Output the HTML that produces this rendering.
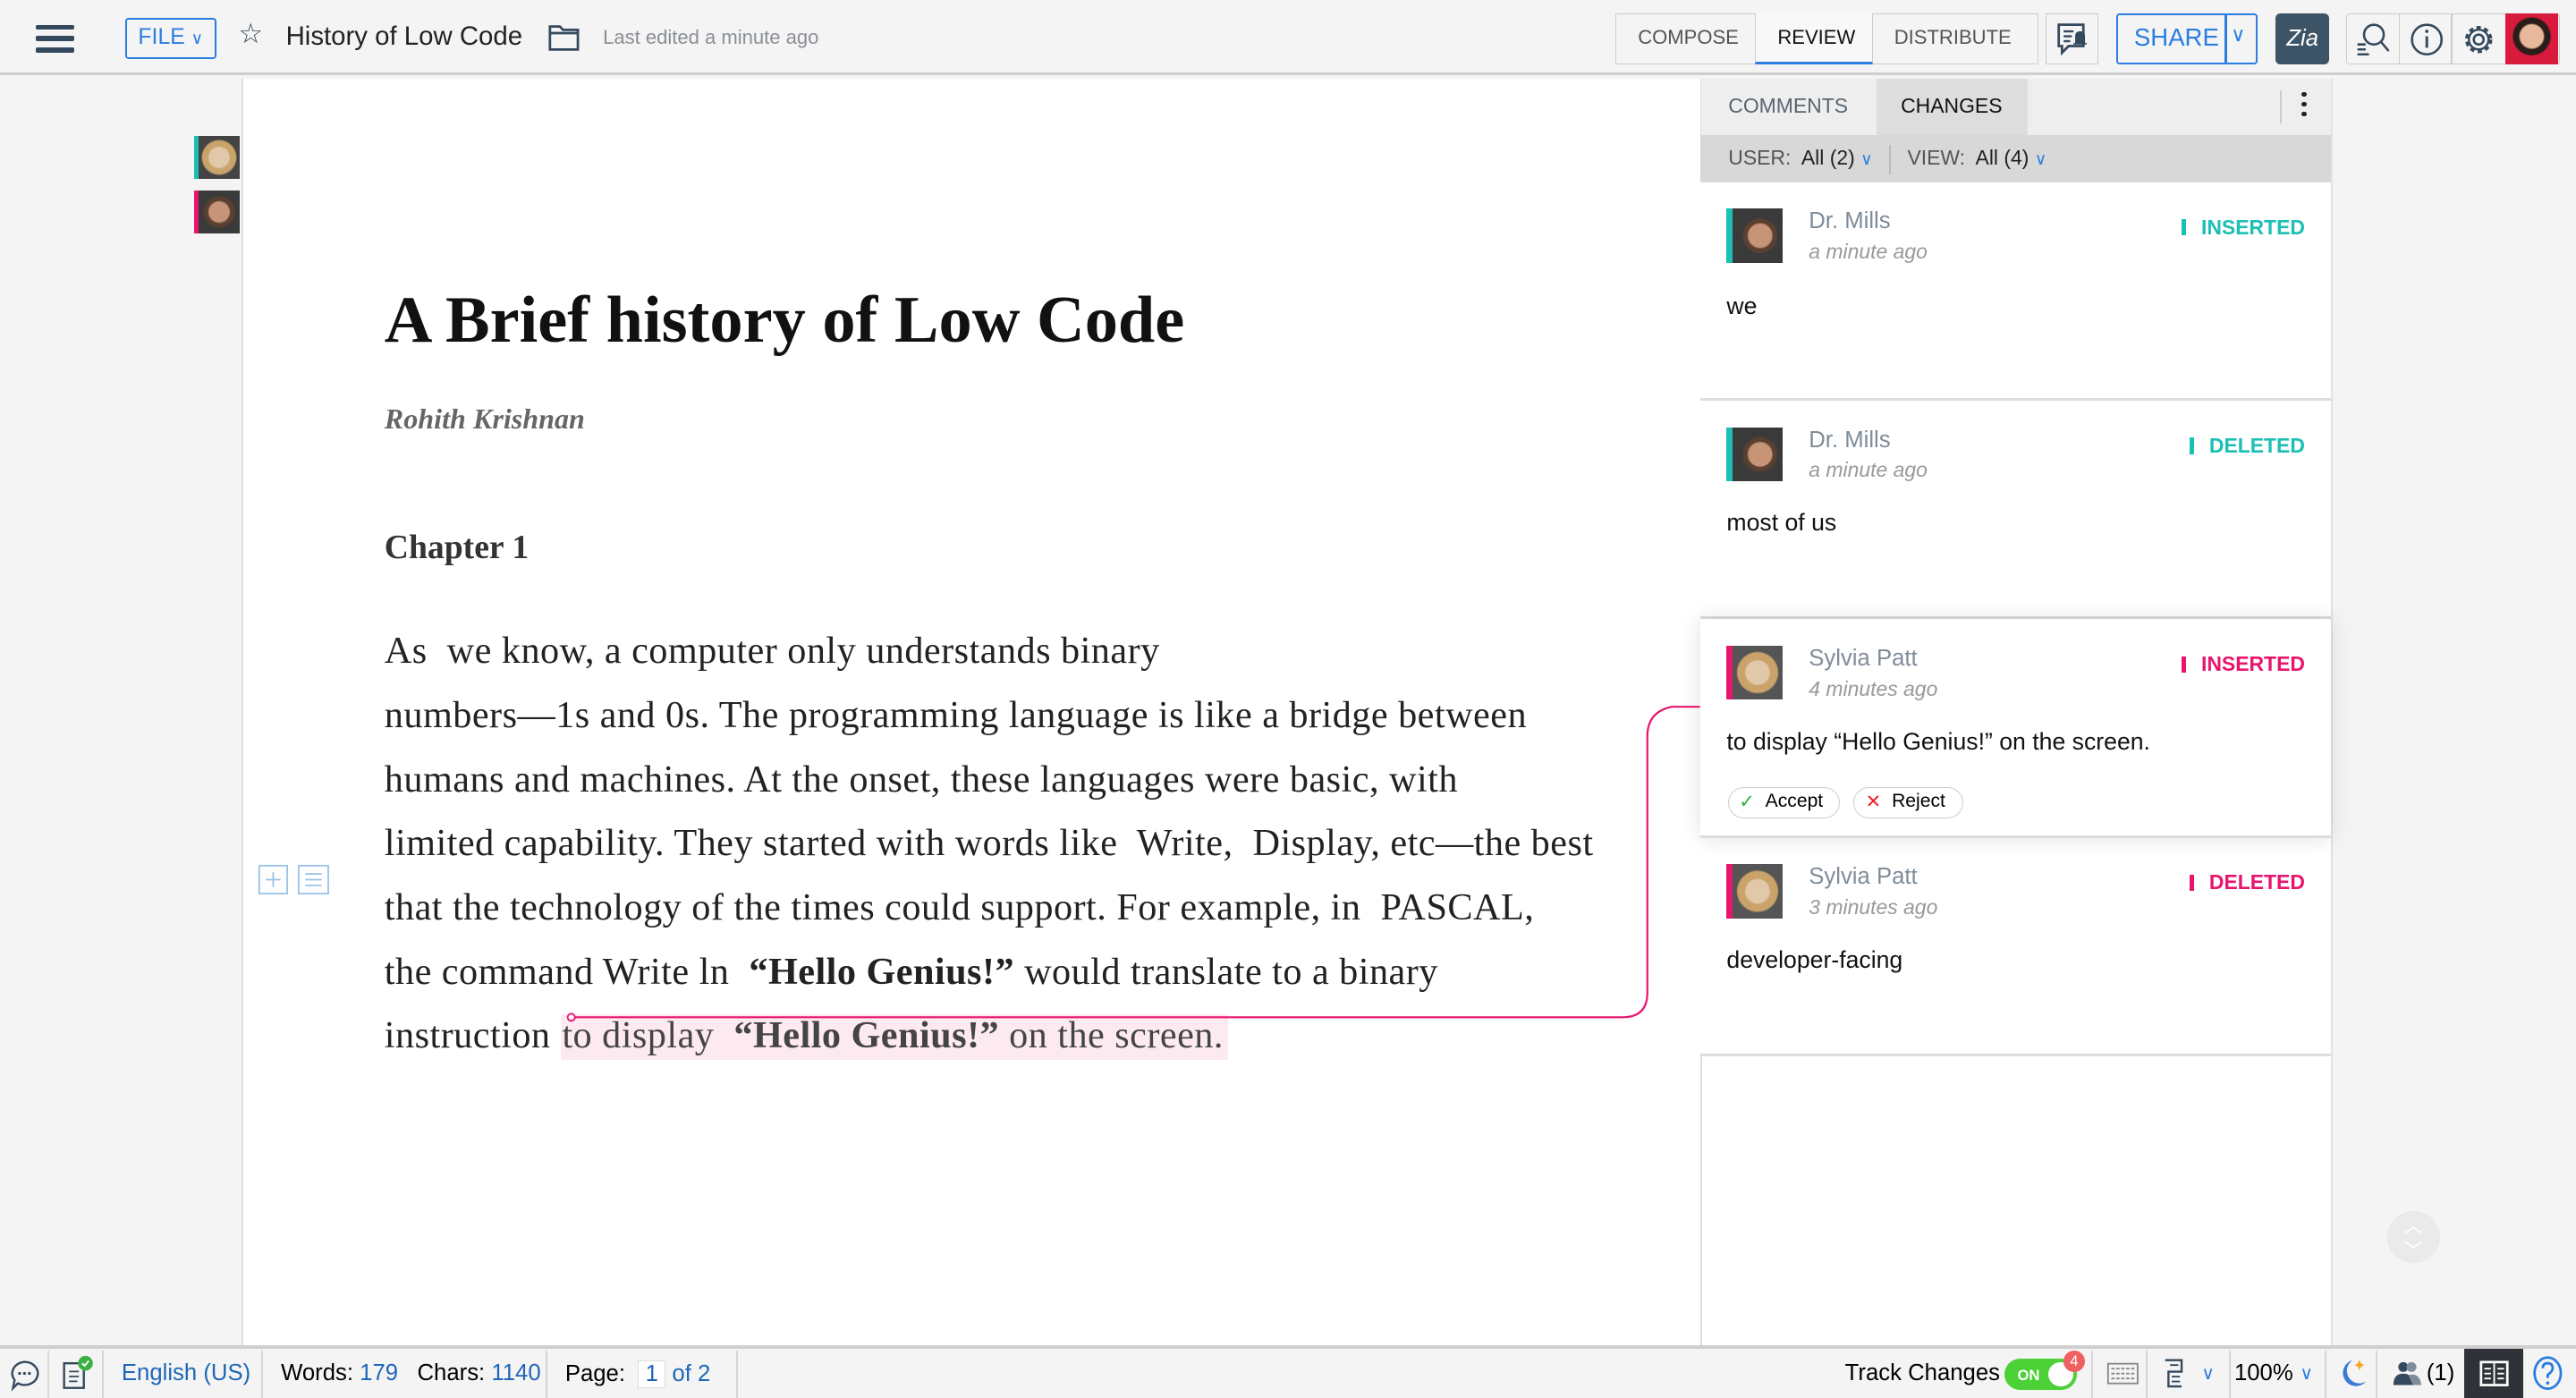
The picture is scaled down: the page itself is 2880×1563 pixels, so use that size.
<!DOCTYPE html>
<html><head><meta charset="utf-8"><style>
*{box-sizing:border-box;margin:0;padding:0}
html,body{width:2880px;height:1563px;overflow:hidden;background:#f4f4f4}
#r{zoom:1.83674;width:1568px;height:851px;position:relative;font-family:"Liberation Sans",sans-serif;background:#f4f4f4}
.a{position:absolute}
.top{left:0;top:0;width:1568px;height:46px;background:#f4f4f4;border-bottom:2px solid #cfcfcf}
.btn{position:absolute;border:1px solid #ccc;background:#f4f4f4;top:8px;height:31px}
.serif{font-family:"Liberation Serif",serif}
.line{position:absolute;left:234px;font-family:"Liberation Serif",serif;font-size:23px;letter-spacing:.25px;color:#222;white-space:nowrap}
.card{position:absolute;left:1035px;width:384px;height:133px;background:#fff;border-bottom:2px solid #ddd}
.av{position:absolute;left:16px;top:16px;width:34px;height:33px;border-left:4px solid #1bbfb4}
.nm{position:absolute;left:66px;top:16px;font-size:14px;color:#7f8c99}
.tm{position:absolute;left:66px;top:35px;font-size:12.5px;color:#999;font-style:italic}
.tag{position:absolute;right:16px;top:20px;font-size:12.5px;font-weight:bold}
.tag:before{content:"";display:inline-block;width:3px;height:10px;background:currentColor;margin-right:9px;vertical-align:-1px}
.txt{position:absolute;left:16px;top:66px;font-size:14.5px;color:#111}
.sep{position:absolute;top:822px;width:1px;height:29px;background:#d6d6d6}
.sb{position:absolute;top:828px;font-size:14px}
</style></head><body><div id="r">
<div class="a top"></div>
<div class="a" style="left:22px;top:15px;width:23px;height:3px;background:#34495e;border-radius:1px"></div>
<div class="a" style="left:22px;top:22px;width:23px;height:3px;background:#34495e;border-radius:1px"></div>
<div class="a" style="left:22px;top:29px;width:23px;height:3px;background:#34495e;border-radius:1px"></div>
<div class="a" style="left:76px;top:11px;width:56px;height:25px;border:1.5px solid #2a7de1;border-radius:2px;color:#2a7de1;font-size:13.5px;padding:3px 0 0 7px">FILE <span style="font-size:10px">&#8744;</span></div>
<div class="a" style="left:145px;top:11px;font-size:17px;color:#34495e">☆</div>
<div class="a" style="left:174px;top:13px;font-size:16px;color:#222">History of Low Code</div>
<svg class="a" style="left:334px;top:14px" width="19" height="17"><path d="M1 2h6l2 2h9v12H1z" fill="none" stroke="#34495e" stroke-width="1.5"/><path d="M1 6h17" stroke="#34495e" stroke-width="1.5"/></svg>
<div class="a" style="left:367px;top:16px;font-size:12px;color:#8a8f96">Last edited a minute ago</div>
<div class="btn" style="left:983px;width:258px"></div>
<div class="a" style="left:997px;top:16px;font-size:12px;color:#555">COMPOSE</div>
<div class="a" style="left:1068px;top:8px;width:72px;height:31px;border-left:1px solid #ccc;border-right:1px solid #ccc;border-bottom:2px solid #2a7de1;background:#f8f8f8"></div>
<div class="a" style="left:1082px;top:16px;font-size:12px;color:#111">REVIEW</div>
<div class="a" style="left:1153px;top:16px;font-size:12px;color:#555">DISTRIBUTE</div>
<div class="btn" style="left:1245px;width:32px"></div>
<svg class="a" style="left:1251px;top:13px" width="20" height="22"><path d="M2 2h15v13H8l-4 4v-4H2z" fill="none" stroke="#34495e" stroke-width="1.5"/><path d="M5 6h6M5 9h5M5 12h4" stroke="#34495e" stroke-width="1.3"/><path d="M12 9q0-3 3-3t3 3v4h1v1h-8v-1h1z" fill="#34495e"/></svg>
<div class="a" style="left:1288px;top:8px;width:86px;height:31px;border:1.5px solid #2a7de1;border-radius:2px"></div>
<div class="a" style="left:1354px;top:8px;width:1.5px;height:31px;background:#2a7de1"></div>
<div class="a" style="left:1299px;top:14px;font-size:15px;color:#2a7de1">SHARE</div>
<div class="a" style="left:1358px;top:14px;font-size:12px;color:#2a7de1">&#8744;</div>
<div class="a" style="left:1385px;top:8px;width:33px;height:31px;background:#3d5466;border-radius:3px;color:#fff;font-size:14px;font-style:italic;text-align:center;line-height:31px">Zia</div>
<div class="btn" style="left:1428px;width:130px;border-radius:2px"></div>
<div class="a" style="left:1460px;top:8px;width:1px;height:31px;background:#ccc"></div>
<div class="a" style="left:1492px;top:8px;width:1px;height:31px;background:#ccc"></div>
<svg class="a" style="left:1433px;top:13px" width="22" height="22"><circle cx="12" cy="8" r="6" fill="none" stroke="#34495e" stroke-width="1.4"/><path d="M16 12l5 6M2 14h5M2 17h5M2 20h7" stroke="#34495e" stroke-width="1.4"/></svg>
<svg class="a" style="left:1466px;top:13px" width="22" height="22"><circle cx="11" cy="11" r="9" fill="none" stroke="#34495e" stroke-width="1.4"/><path d="M11 9v7" stroke="#34495e" stroke-width="1.6"/><circle cx="11" cy="6" r="1" fill="#34495e"/></svg>
<svg class="a" style="left:1498px;top:13px" width="22" height="22"><circle cx="11" cy="11" r="3" fill="none" stroke="#34495e" stroke-width="1.4"/><circle cx="11" cy="11" r="7" fill="none" stroke="#34495e" stroke-width="2.6" stroke-dasharray="2.5 2"/><circle cx="11" cy="11" r="6" fill="none" stroke="#34495e" stroke-width="1.3"/></svg>
<div class="a" style="left:1525px;top:8px;width:32px;height:31px;background:radial-gradient(circle at 50% 45%,#e8b89a 0 7px,#2a1c18 8px 11px,#d81a3d 12px)"></div>
<div class="a" style="left:147px;top:48px;width:1px;height:772px;background:#ddd"></div>
<div class="a" style="left:148px;top:48px;width:887px;height:772px;background:#fff"></div>
<div class="a" style="left:118px;top:83px;width:28px;height:26px;border-left:3px solid #1bbfb4;background:radial-gradient(circle at 50% 50%,#e0c8a8 0 6px,#c9a36a 7px 10px,#444 11px)"></div>
<div class="a" style="left:118px;top:116px;width:28px;height:26px;border-left:3px solid #e8146d;background:radial-gradient(circle at 50% 50%,#c89478 0 6px,#5a4030 7px 9px,#3a3a3a 10px)"></div>
<div class="a serif" style="left:234px;top:172px;font-size:40.5px;font-weight:bold;color:#111;white-space:nowrap">A Brief history of Low Code</div>
<div class="a serif" style="left:234px;top:245px;font-size:17.5px;font-weight:bold;font-style:italic;color:#666">Rohith Krishnan</div>
<div class="a serif" style="left:234px;top:321px;font-size:20.5px;font-weight:bold;color:#333">Chapter 1</div>
<div class="line" style="top:383px">As&nbsp; we know, a computer only understands binary</div>
<div class="line" style="top:422px">numbers—1s and 0s. The programming language is like a bridge between</div>
<div class="line" style="top:461px">humans and machines. At the onset, these languages were basic, with</div>
<div class="line" style="top:500px">limited capability. They started with words like&nbsp; Write,&nbsp; Display, etc—the best</div>
<div class="line" style="top:539px">that the technology of the times could support. For example, in&nbsp; PASCAL,</div>
<div class="line" style="top:578px">the command Write ln&nbsp; <b>“Hello Genius!”</b> would translate to a binary</div>
<div class="line" style="top:617px">instruction <span style="background:#fdeaf1;color:#444;padding:0 3px 2px 1px">to display&nbsp; <b>“Hello Genius!”</b> on the screen.</span></div>
<svg class="a" style="left:340px;top:425px" width="700" height="205"><path d="M8 194H648q15 0 15-15V23q0-15 15-18l17 0" fill="none" stroke="#e8146d" stroke-width="1.2"/><circle cx="8" cy="194" r="2.2" fill="#fff" stroke="#e8146d"/></svg>
<svg class="a" style="left:157px;top:526px" width="46" height="20"><rect x="1" y="1" width="17" height="17" fill="none" stroke="#9cc3e8"/><path d="M9.5 5v9M5 9.5h9" stroke="#9cc3e8"/><rect x="25" y="1" width="18" height="17" fill="none" stroke="#9cc3e8"/><path d="M29 6h10M29 9.5h10M29 13h10" stroke="#9cc3e8"/></svg>
<div class="a" style="left:1035px;top:48px;width:384px;height:772px;background:#fff"></div>
<div class="a" style="left:1035px;top:48px;width:384px;height:34px;background:#eee;border-left:1px solid #ddd"></div>
<div class="a" style="left:1052px;top:57px;font-size:12.5px;color:#5a6570">COMMENTS</div>
<div class="a" style="left:1142px;top:48px;width:92px;height:34px;background:#ddd"></div>
<div class="a" style="left:1157px;top:57px;font-size:12.5px;color:#111">CHANGES</div>
<div class="a" style="left:1388px;top:55px;width:1px;height:20px;background:#ccc"></div>
<div class="a" style="left:1401px;top:56px;width:3px;height:3px;background:#222;border-radius:2px;box-shadow:0 6px #222,0 12px #222"></div>
<div class="a" style="left:1035px;top:82px;width:384px;height:29px;background:#d8d8d8"></div>
<div class="a" style="left:1052px;top:89px;font-size:12.5px;color:#555">USER:&nbsp; <span style="color:#222">All (2)</span> <span style="color:#2a7de1;font-size:10px">&#8744;</span></div>
<div class="a" style="left:1150px;top:88px;width:1px;height:18px;background:#bbb"></div>
<div class="a" style="left:1161px;top:89px;font-size:12.5px;color:#555">VIEW:&nbsp; <span style="color:#222">All (4)</span> <span style="color:#2a7de1;font-size:10px">&#8744;</span></div>
<div class="a" style="left:1035px;top:111px;width:1px;height:709px;background:#ddd"></div>
<div class="a" style="left:1419px;top:48px;width:1px;height:772px;background:#e2e2e2"></div>
<div class="card" style="top:111px"><div class="av" style="background:radial-gradient(circle at 55% 50%,#c89478 0 7px,#5a4030 8px 10px,#3a3a3a 11px)"></div><div class="nm">Dr. Mills</div><div class="tm">a minute ago</div><div class="tag" style="color:#1bbfb4">INSERTED</div><div class="txt" style="top:67px">we</div></div>
<div class="card" style="top:244px"><div class="av" style="background:radial-gradient(circle at 55% 50%,#c89478 0 7px,#5a4030 8px 10px,#3a3a3a 11px)"></div><div class="nm">Dr. Mills</div><div class="tm">a minute ago</div><div class="tag" style="color:#1bbfb4">DELETED</div><div class="txt">most of us</div></div>
<div class="card" style="top:377px;box-shadow:0 0 12px rgba(0,0,0,.12);z-index:2"><div class="av" style="border-color:#e8146d;background:radial-gradient(circle at 50% 50%,#e0c8a8 0 7px,#c9a36a 8px 12px,#555 13px)"></div><div class="nm">Sylvia Patt</div><div class="tm">4 minutes ago</div><div class="tag" style="color:#e8146d">INSERTED</div><div class="txt" style="top:66px">to display “Hello Genius!” on the screen.</div>
<div class="a" style="left:17px;top:102px;width:68px;height:19px;border:1px solid #ccc;border-radius:10px;font-size:11.5px;padding:2px 0 0 22px">Accept<span class="a" style="left:6px;top:1px;color:#2db33a">✓</span></div>
<div class="a" style="left:93px;top:102px;width:67px;height:19px;border:1px solid #ccc;border-radius:10px;font-size:11.5px;padding:2px 0 0 23px">Reject<span class="a" style="left:7px;top:1px;color:#e22">✕</span></div></div>
<div class="card" style="top:510px"><div class="av" style="border-color:#e8146d;background:radial-gradient(circle at 50% 50%,#e0c8a8 0 7px,#c9a36a 8px 12px,#555 13px)"></div><div class="nm">Sylvia Patt</div><div class="tm">3 minutes ago</div><div class="tag" style="color:#e8146d">DELETED</div><div class="txt">developer-facing</div></div>
<div class="a" style="left:1453px;top:737px;width:32px;height:32px;border-radius:50%;background:#eaeaea;color:#fff;text-align:center;font-size:12px;line-height:15px;padding-top:2px">︿<br>﹀</div>
<div class="a" style="left:0;top:819px;width:1568px;height:2px;background:#cfcfcf"></div>
<div class="a" style="left:0;top:821px;width:1568px;height:30px;background:#f4f4f4"></div>
<svg class="a" style="left:5px;top:827px" width="20" height="20"><path d="M10 2a8 7 0 1 1-4 13l-3 3 1-5A8 7 0 0 1 10 2z" fill="none" stroke="#34495e" stroke-width="1.3"/><circle cx="7" cy="9" r=".9" fill="#34495e"/><circle cx="10" cy="9" r=".9" fill="#34495e"/><circle cx="13" cy="9" r=".9" fill="#34495e"/></svg>
<div class="sep" style="left:29px"></div>
<svg class="a" style="left:37px;top:825px" width="20" height="22"><rect x="2" y="5" width="12" height="15" fill="none" stroke="#34495e" stroke-width="1.3"/><path d="M5 10h6M5 13h6M5 16h5" stroke="#34495e"/><circle cx="15" cy="5" r="4.5" fill="#3cb043"/><path d="M13 5l1.5 1.5 2.5-3" stroke="#fff" fill="none"/></svg>
<div class="sep" style="left:62px"></div>
<div class="sb" style="left:74px;color:#1f66b8">English (US)</div>
<div class="sep" style="left:159px"></div>
<div class="sb" style="left:171px">Words: <span style="color:#1f66b8">179</span>&nbsp;&nbsp; Chars: <span style="color:#1f66b8">1140</span></div>
<div class="sep" style="left:332px"></div>
<div class="sb" style="left:344px">Page:&nbsp; <span style="display:inline-block;border:1px solid #ddd;background:#fff;color:#1f66b8;padding:0 4px">1</span> <span style="color:#1f66b8">of 2</span></div>
<div class="sep" style="left:448px"></div>
<div class="sb" style="left:1123px">Track Changes</div>
<div class="a" style="left:1220px;top:827px;width:44px;height:19px;background:#4cd137;border-radius:10px;color:#fff;font-size:9px;font-weight:bold;padding:5px 0 0 8px">ON<span class="a" style="left:27px;top:2px;width:15px;height:15px;background:#fff;border-radius:50%"></span></div>
<div class="a" style="left:1256px;top:822px;width:13px;height:13px;background:#f06060;border-radius:50%;color:#fff;font-size:9px;text-align:center;line-height:13px">4</div>
<div class="sep" style="left:1273px"></div>
<svg class="a" style="left:1282px;top:828px" width="20" height="16"><rect x="1" y="2" width="18" height="12" fill="none" stroke="#888"/><path d="M3 5h14M3 8h14M3 11h14" stroke="#888" stroke-dasharray="2 1"/></svg>
<div class="sep" style="left:1306px"></div>
<svg class="a" style="left:1316px;top:826px" width="16" height="20"><path d="M2 2h10v7H4v9h8" fill="none" stroke="#34495e" stroke-width="1.3"/><path d="M5 5h5M6 12h5M6 15h5" stroke="#34495e"/></svg>
<div class="a" style="left:1340px;top:829px;font-size:11px;color:#2a7de1">&#8744;</div>
<div class="sep" style="left:1357px"></div>
<div class="sb" style="left:1360px">100%</div>
<div class="a" style="left:1400px;top:829px;font-size:11px;color:#2a7de1">&#8744;</div>
<div class="sep" style="left:1415px"></div>
<svg class="a" style="left:1423px;top:826px" width="18" height="20"><path d="M9 2a8 8 0 1 0 8 13A7 7 0 0 1 9 2z" fill="#3a7bd5"/><path d="M13 2l1 2 2 1-2 1-1 2-1-2-2-1 2-1z" fill="#f5a623"/></svg>
<div class="sep" style="left:1446px"></div>
<svg class="a" style="left:1456px;top:828px" width="20" height="16"><circle cx="7" cy="4" r="3" fill="#34495e"/><path d="M1 15q0-7 6-7t6 7z" fill="#34495e"/><circle cx="12" cy="4" r="3" fill="#7f8c99"/><path d="M10 9q7-2 8 6h-5z" fill="#7f8c99"/></svg>
<div class="sb" style="left:1477px">(1)</div>
<div class="a" style="left:1500px;top:821px;width:36px;height:30px;background:#2f3237"></div>
<svg class="a" style="left:1509px;top:828px" width="18" height="16"><rect x="1" y="1" width="16" height="14" fill="none" stroke="#fff" stroke-width="1.5"/><path d="M9 1v14M3 5h4M3 8h4M3 11h4M11 5h4M11 8h4M11 11h4" stroke="#fff"/></svg>
<svg class="a" style="left:1541px;top:825px" width="20" height="22"><ellipse cx="10" cy="11" rx="8" ry="9.5" fill="none" stroke="#2a7de1" stroke-width="1.5"/><path d="M7 8q0-3 3-3t3 3q0 2-3 4v2" fill="none" stroke="#2a7de1" stroke-width="1.5"/><circle cx="10" cy="17" r="1" fill="#2a7de1"/></svg>
</div></body></html>
